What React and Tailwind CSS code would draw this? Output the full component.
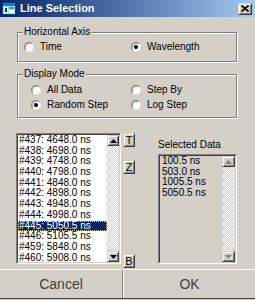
import React from 'react'

const lineItems = [
  '#437: 4648.0 ns',
  '#438: 4698.0 ns',
  '#439: 4748.0 ns',
  '#440: 4798.0 ns',
  '#441: 4848.0 ns',
  '#442: 4898.0 ns',
  '#443: 4948.0 ns',
  '#444: 4998.0 ns',
  '#445: 5050.5 ns',
  '#446: 5105.5 ns',
  '#459: 5848.0 ns',
  '#460: 5908.0 ns',
]

const selectedItems = ['100.5 ns', '503.0 ns', '1005.5 ns', '5050.5 ns']

const raised =
  'border border-t-[#d4d0c8] border-l-[#d4d0c8] border-b-[#404040] border-r-[#404040] shadow-[inset_1px_1px_0_#ffffff,inset_-1px_-1px_0_#808080] bg-[#d4d0c8]'

function Radio({ checked, label }) {
  return (
    <div className="flex items-center gap-[6px]">
      <div className="w-[10px] h-[10px] rounded-full bg-white border border-t-[#808080] border-l-[#808080] border-b-[#e8e6e0] border-r-[#e8e6e0] flex items-center justify-center shadow-[inset_1px_1px_0_#b8b4ac]">
        {checked && <div className="w-[4px] h-[4px] rounded-full bg-black" />}
      </div>
      <span className="text-[10px] leading-[12px]">{label}</span>
    </div>
  )
}

function Frame({ title, className, children }) {
  return (
    <div
      className={`relative border border-[#808080] shadow-[1px_1px_0_#ffffff,inset_1px_1px_0_#ffffff] ${className}`}
    >
      <span className="absolute -top-[7px] left-[5px] px-[1px] bg-[#d4d0c8] text-[10px] leading-[12px]">
        {title}
      </span>
      {children}
    </div>
  )
}

function Arrow({ down, disabled }) {
  return (
    <svg width="7" height="4" viewBox="0 0 7 4">
      {disabled && (
        <path d={down ? 'M1 1h5L3.5 3.5z' : 'M1 3.5h5L3.5 1z'} fill="#ffffff" transform="translate(1 1)" />
      )}
      <path d={down ? 'M0 0h7L3.5 4z' : 'M0 4h7L3.5 0z'} fill={disabled ? '#808080' : '#000000'} />
    </svg>
  )
}

function ScrollBar({ disabled, width }) {
  return (
    <div className={`flex flex-col h-full ${width}`}>
      <div className={`${raised} h-[11px] flex items-center justify-center`}>
        <Arrow disabled={disabled} />
      </div>
      <div className="flex-1 bg-[repeating-conic-gradient(#ffffff_0%_25%,#d4d0c8_0%_50%)] bg-[length:2px_2px]" />
      <div className={`${raised} h-[11px] flex items-center justify-center`}>
        <Arrow down disabled={disabled} />
      </div>
    </div>
  )
}

function SunkenBox({ className, inner, children }) {
  return (
    <div
      className={`border border-t-[#808080] border-l-[#808080] border-b-white border-r-white ${className}`}
    >
      <div
        className={`h-full border border-t-[#404040] border-l-[#404040] border-b-[#d4d0c8] border-r-[#d4d0c8] flex ${inner}`}
      >
        {children}
      </div>
    </div>
  )
}

function SmallButton({ label, className }) {
  return (
    <div
      className={`${raised} w-[12px] h-[14px] flex items-center justify-center text-[11px] leading-none ${className}`}
    >
      {label}
    </div>
  )
}

function TitleIcon() {
  return (
    <svg width="14" height="13" viewBox="0 0 14 13">
      <rect x="0.5" y="0.5" width="13" height="12" fill="#9fe7ef" stroke="#0b3d7a" />
      <rect x="1" y="1" width="12" height="3" fill="#127bb8" />
      <rect x="2" y="5" width="4" height="6" fill="#ffffff" />
      <rect x="7" y="5" width="5" height="2" fill="#2a8fd0" />
      <rect x="7" y="8" width="5" height="3" fill="#ffffff" />
      <rect x="3" y="6" width="2" height="4" fill="#0b3d7a" />
    </svg>
  )
}

export default function App() {
  return (
    <div className="w-[255px] h-[300px] bg-[#d4d0c8] flex flex-col overflow-hidden text-black font-['Liberation_Sans',Arial,sans-serif] select-none">
      {/* title bar */}
      <div className="h-[17px] shrink-0 flex items-center pl-[2px] pr-[3px] bg-gradient-to-r from-[#0a246a] to-[#a6caf0]">
        <TitleIcon />
        <span className="ml-[4px] text-white font-bold text-[11px] leading-none">Line Selection</span>
        <div className={`${raised} ml-auto w-[14px] h-[12px] flex items-center justify-center`}>
          <svg width="8" height="7" viewBox="0 0 8 7">
            <path d="M0.5 0.5L7.5 6.5M7.5 0.5L0.5 6.5" stroke="#000" strokeWidth="1.6" />
          </svg>
        </div>
      </div>

      {/* axis + mode */}
      <div className="pl-[17px] pr-[18px]">
        <Frame title="Horizontal Axis" className="mt-[15px] h-[30px] flex items-center">
          <div className="grid grid-cols-[107px_1fr] pl-[6px] w-full">
            <Radio label="Time" />
            <Radio checked label="Wavelength" />
          </div>
        </Frame>

        <Frame title="Display Mode" className="mt-[12px] h-[44px] pt-[7px]">
          <div className="grid grid-cols-[100px_1fr] grid-rows-[15px_15px] items-center pl-[13px]">
            <Radio label="All Data" />
            <Radio label="Step By" />
            <Radio checked label="Random Step" />
            <Radio label="Log Step" />
          </div>
        </Frame>
      </div>

      {/* lists */}
      <div className="mt-[15px] h-[136px] shrink-0 flex pl-[16px]">
        <SunkenBox className="w-[105px] h-[131px]" inner="bg-white">
          <div className="flex-1 overflow-hidden">
            {lineItems.map((item) => {
              const active = item.startsWith('#445')
              return (
                <div
                  key={item}
                  className={`h-[10.7px] leading-[10.7px] text-[10px] pl-[1px] whitespace-nowrap ${
                    active
                      ? 'bg-[#0a246a] text-white outline outline-1 outline-dotted outline-[#d8d890] -outline-offset-1'
                      : ''
                  }`}
                >
                  {item}
                </div>
              )
            })}
          </div>
          <ScrollBar width="w-[12px]" />
        </SunkenBox>

        <div className="ml-[2px] flex flex-col">
          <SmallButton label="T" />
          <SmallButton label="Z" className="mt-[13px]" />
          <SmallButton label="B" className="mt-auto mb-[1px]" />
        </div>

        <div className="ml-[23px] pt-[6px] flex flex-col">
          <span className="h-[12px] text-[10px] leading-[12px]">Selected Data</span>
          <SunkenBox className="mt-[3px] w-[79px] h-[110px]" inner="bg-[#d4d0c8]">
            <div className="flex-1 overflow-hidden pl-[2px]">
              {selectedItems.map((item) => (
                <div key={item} className="h-[10.7px] leading-[10.7px] text-[10px] whitespace-nowrap">
                  {item}
                </div>
              ))}
            </div>
            <ScrollBar disabled width="w-[13px]" />
          </SunkenBox>
        </div>
      </div>

      {/* bottom buttons */}
      <div className="flex h-[30px] shrink-0 border-b border-[#404040]">
        <div className="w-[123px] flex items-center justify-center border-t border-white border-r border-r-[#808080] text-[14px] text-[#404040]">
          Cancel
        </div>
        <div className="flex-1 flex items-center justify-center border-t border-white border-l border-l-white text-[14px] text-[#404040]">
          OK
        </div>
      </div>
    </div>
  )
}
